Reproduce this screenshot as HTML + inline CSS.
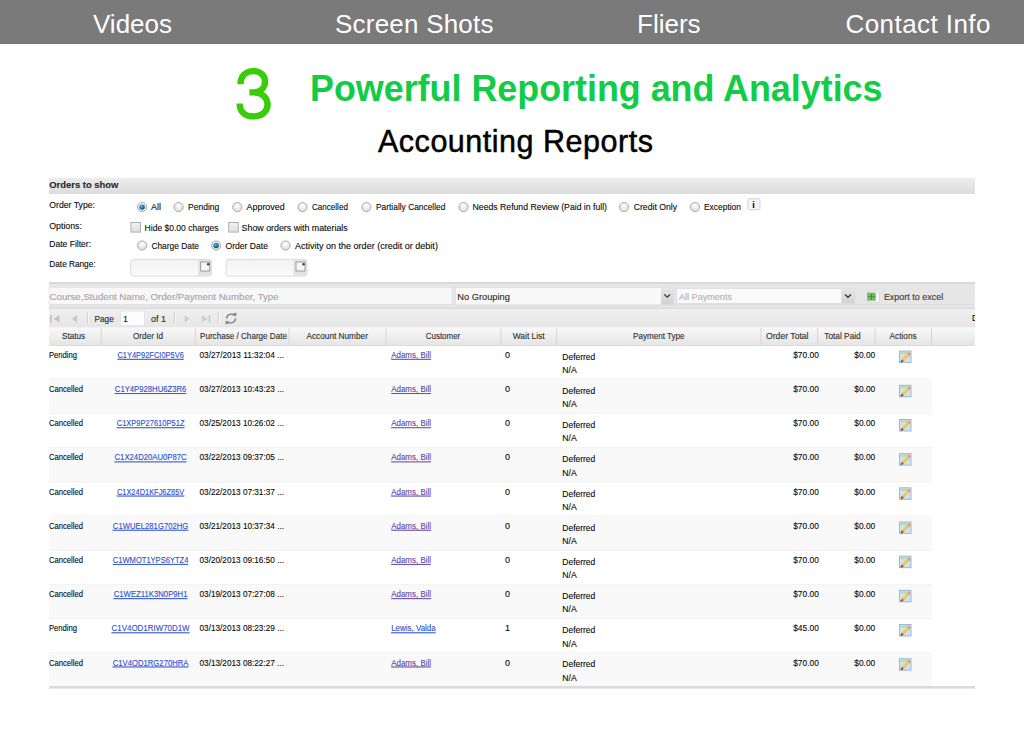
<!DOCTYPE html><html><head><meta charset="utf-8"><style>*{margin:0;padding:0}html,body{width:1024px;height:748px;overflow:hidden;background:#fff}svg{display:block}text{font-family:"Liberation Sans",sans-serif}</style></head><body>
<svg width="1024" height="748" viewBox="0 0 1024 748">
<defs>
<linearGradient id="hg" x1="0" y1="0" x2="0" y2="1"><stop offset="0" stop-color="#ececec"/><stop offset="1" stop-color="#dcdcdc"/></linearGradient>
<linearGradient id="colg" x1="0" y1="0" x2="0" y2="1"><stop offset="0" stop-color="#f8f8f8"/><stop offset="1" stop-color="#e4e4e4"/></linearGradient>
<linearGradient id="pg" x1="0" y1="0" x2="0" y2="1"><stop offset="0" stop-color="#efefef"/><stop offset="1" stop-color="#e6e6e6"/></linearGradient>
<linearGradient id="ig" x1="0" y1="0" x2="0" y2="1"><stop offset="0" stop-color="#f2f2f2"/><stop offset="1" stop-color="#fbfbfb"/></linearGradient>
<linearGradient id="bg" x1="0" y1="0" x2="0" y2="1"><stop offset="0" stop-color="#e6e6e6"/><stop offset="1" stop-color="#d2d2d2"/></linearGradient>
<radialGradient id="rg" cx="0.5" cy="0.35" r="0.6"><stop offset="0" stop-color="#ffffff"/><stop offset="1" stop-color="#dcdcdc"/></radialGradient>
<radialGradient id="dg" cx="0.42" cy="0.38" r="0.62"><stop offset="0" stop-color="#6cc6f0"/><stop offset="0.55" stop-color="#1a78b0"/><stop offset="1" stop-color="#0b4f80"/></radialGradient>
<linearGradient id="cg" x1="0" y1="0" x2="0" y2="1"><stop offset="0" stop-color="#f0f0f0"/><stop offset="1" stop-color="#e0e0e0"/></linearGradient>
</defs>
<rect x="0" y="0" width="1024" height="44" fill="#7a7a7a"/>
<rect x="0" y="43" width="1024" height="1" fill="#727272"/>
<text x="93" y="33" font-size="26" fill="#fff">Videos</text>
<text x="335" y="33" font-size="26" fill="#fff" textLength="158.5" lengthAdjust="spacing">Screen Shots</text>
<text x="637" y="33" font-size="26" fill="#fff">Fliers</text>
<text x="845.5" y="33" font-size="26" fill="#fff" textLength="145" lengthAdjust="spacing">Contact Info</text>
<path d="M240.5 84.2 C240.5 75.8 246 71.1 253.5 71.1 C260.5 71.1 265 75.8 265 81.6 C265 88.2 260 92.4 253 92.4 L249.4 92.4 M249.4 92.4 L253.5 92.4 C261.8 92.4 267.6 97.6 267.6 104.6 C267.6 111.8 261.6 116.4 253.3 116.4 C244.8 116.4 239.6 111.2 239.6 103.4" fill="none" stroke="#3acc08" stroke-width="6.4"/>
<text x="310" y="101" font-size="36" font-weight="bold" fill="#11cc44" textLength="572.5" lengthAdjust="spacingAndGlyphs">Powerful Reporting and Analytics</text>
<text x="378" y="151.7" font-size="30.5" fill="#000" stroke="#000" stroke-width="0.5" textLength="275" lengthAdjust="spacing">Accounting Reports</text>
<rect x="49" y="178" width="926" height="16" fill="url(#hg)"/>
<text x="49.3" y="188.3" font-size="9.2" textLength="69" lengthAdjust="spacingAndGlyphs" fill="#2a2a2a" stroke="#2a2a2a" stroke-width="0.12" font-weight="bold">Orders to show</text>
<text x="49.3" y="207.7" font-size="9" textLength="45.7" lengthAdjust="spacingAndGlyphs" stroke="#333" stroke-width="0.12">Order Type:</text>
<text x="49.3" y="228.8" font-size="9" textLength="32.6" lengthAdjust="spacingAndGlyphs" stroke="#333" stroke-width="0.12">Options:</text>
<text x="49.3" y="246.8" font-size="9" textLength="41.8" lengthAdjust="spacingAndGlyphs" stroke="#333" stroke-width="0.12">Date Filter:</text>
<text x="49.3" y="267.3" font-size="9" textLength="46.3" lengthAdjust="spacingAndGlyphs" stroke="#333" stroke-width="0.12">Date Range:</text>
<circle cx="142.1" cy="207.1" r="4.6" fill="url(#rg)" stroke="#a9a9a9" stroke-width="0.95"/>
<circle cx="142.1" cy="207.1" r="2.7" fill="url(#dg)"/>
<text x="151" y="209.8" font-size="9" textLength="10" lengthAdjust="spacingAndGlyphs" stroke="#333" stroke-width="0.12">All</text>
<circle cx="178.6" cy="207.1" r="4.6" fill="url(#rg)" stroke="#a9a9a9" stroke-width="0.95"/>
<text x="188" y="209.8" font-size="9" textLength="31.3" lengthAdjust="spacingAndGlyphs" stroke="#333" stroke-width="0.12">Pending</text>
<circle cx="237.3" cy="207.1" r="4.6" fill="url(#rg)" stroke="#a9a9a9" stroke-width="0.95"/>
<text x="246.6" y="209.8" font-size="9" textLength="38" lengthAdjust="spacingAndGlyphs" stroke="#333" stroke-width="0.12">Approved</text>
<circle cx="302.5" cy="207.1" r="4.6" fill="url(#rg)" stroke="#a9a9a9" stroke-width="0.95"/>
<text x="311.9" y="209.8" font-size="9" textLength="36" lengthAdjust="spacingAndGlyphs" stroke="#333" stroke-width="0.12">Cancelled</text>
<circle cx="366.4" cy="207.1" r="4.6" fill="url(#rg)" stroke="#a9a9a9" stroke-width="0.95"/>
<text x="376" y="209.8" font-size="9" textLength="69.4" lengthAdjust="spacingAndGlyphs" stroke="#333" stroke-width="0.12">Partially Cancelled</text>
<circle cx="463.5" cy="207.1" r="4.6" fill="url(#rg)" stroke="#a9a9a9" stroke-width="0.95"/>
<text x="472.6" y="209.8" font-size="9" textLength="134.4" lengthAdjust="spacingAndGlyphs" stroke="#333" stroke-width="0.12">Needs Refund Review (Paid in full)</text>
<circle cx="624" cy="207.1" r="4.6" fill="url(#rg)" stroke="#a9a9a9" stroke-width="0.95"/>
<text x="633.7" y="209.8" font-size="9" textLength="43.3" lengthAdjust="spacingAndGlyphs" stroke="#333" stroke-width="0.12">Credit Only</text>
<circle cx="695" cy="207.1" r="4.6" fill="url(#rg)" stroke="#a9a9a9" stroke-width="0.95"/>
<text x="704" y="209.8" font-size="9" textLength="37" lengthAdjust="spacingAndGlyphs" stroke="#333" stroke-width="0.12">Exception</text>
<rect x="748" y="198.8" width="12" height="11" rx="1.5" fill="#f6f6f6" stroke="#cccccc" stroke-width="0.9"/>
<text x="752.3" y="207.6" font-size="9" stroke="#333" stroke-width="0.12" font-weight="bold">i</text>
<rect x="130.9" y="222.5" width="9.6" height="9.6" fill="url(#cg)" stroke="#a8a8a8" stroke-width="0.9"/>
<text x="144.6" y="230.8" font-size="9" textLength="73.9" lengthAdjust="spacingAndGlyphs" stroke="#333" stroke-width="0.12">Hide $0.00 charges</text>
<rect x="228.7" y="222.5" width="9.6" height="9.6" fill="url(#cg)" stroke="#a8a8a8" stroke-width="0.9"/>
<text x="241.6" y="230.8" font-size="9" textLength="106.1" lengthAdjust="spacingAndGlyphs" stroke="#333" stroke-width="0.12">Show orders with materials</text>
<circle cx="142.1" cy="245.5" r="4.6" fill="url(#rg)" stroke="#a9a9a9" stroke-width="0.95"/>
<text x="151.4" y="248.7" font-size="9" textLength="47.5" lengthAdjust="spacingAndGlyphs" stroke="#333" stroke-width="0.12">Charge Date</text>
<circle cx="216.1" cy="245.5" r="4.6" fill="url(#rg)" stroke="#a9a9a9" stroke-width="0.95"/>
<circle cx="216.1" cy="245.5" r="2.7" fill="url(#dg)"/>
<text x="225.5" y="248.7" font-size="9" textLength="42.5" lengthAdjust="spacingAndGlyphs" stroke="#333" stroke-width="0.12">Order Date</text>
<circle cx="285.5" cy="245.5" r="4.6" fill="url(#rg)" stroke="#a9a9a9" stroke-width="0.95"/>
<text x="294.9" y="248.7" font-size="9" textLength="143" lengthAdjust="spacingAndGlyphs" stroke="#333" stroke-width="0.12">Activity on the order (credit or debit)</text>
<rect x="130.7" y="259.3" width="81" height="16.8" rx="3" fill="url(#ig)" stroke="#d6d6d6" stroke-width="0.9"/>
<rect x="198.2" y="259.8" width="13" height="15.8" fill="#e2e2e2"/>
<rect x="200.7" y="262" width="9" height="9" fill="#f6f6f6" stroke="#8a8a8a" stroke-width="0.8"/>
<circle cx="208.2" cy="264.2" r="1.3" fill="#444"/>
<rect x="226.0" y="259.3" width="81" height="16.8" rx="3" fill="url(#ig)" stroke="#d6d6d6" stroke-width="0.9"/>
<rect x="293.5" y="259.8" width="13" height="15.8" fill="#e2e2e2"/>
<rect x="296.0" y="262" width="9" height="9" fill="#f6f6f6" stroke="#8a8a8a" stroke-width="0.8"/>
<circle cx="303.5" cy="264.2" r="1.3" fill="#444"/>
<rect x="49" y="282" width="926" height="2" fill="#d8d8d8"/>
<rect x="49" y="284" width="926" height="25" fill="#e6e6e6"/>
<rect x="49" y="304.4" width="926" height="0.8" fill="#dddddd"/>
<rect x="49" y="307.6" width="926" height="1.2" fill="#dadada"/>
<rect x="49" y="287.5" width="403" height="17" fill="#f7f7f7" stroke="#dedede" stroke-width="0.6"/>
<text x="49.6" y="299.7" font-size="9.8" textLength="229" lengthAdjust="spacingAndGlyphs" fill="#a3a3a3" stroke="#a3a3a3" stroke-width="0.12">Course,Student Name, Order/Payment Number, Type</text>
<rect x="455.2" y="287.3" width="218.4" height="17.6" fill="#f9f9f9" stroke="#d8d8d8" stroke-width="0.7"/>
<rect x="661" y="287.6" width="12.5" height="17" fill="url(#bg)"/>
<path d="M664.3 294.4 L667.2 297.2 L670.1 294.4" fill="none" stroke="#333" stroke-width="1.3"/>
<text x="457.3" y="300.3" font-size="9" textLength="52.5" lengthAdjust="spacingAndGlyphs" fill="#2a2a2a" stroke="#2a2a2a" stroke-width="0.12">No Grouping</text>
<rect x="676.7" y="288.3" width="178.2" height="15.3" fill="#fafafa" stroke="#d8d8d8" stroke-width="0.7"/>
<rect x="841.2" y="288.6" width="13.5" height="14.8" fill="url(#bg)"/>
<path d="M845 294.5 L848 297.3 L851 294.5" fill="none" stroke="#333" stroke-width="1.3"/>
<text x="679" y="299.8" font-size="9" textLength="53" lengthAdjust="spacingAndGlyphs" fill="#b0b0b0" stroke="#b0b0b0" stroke-width="0.12">All Payments</text>
<path d="M868.5 290.8 h8 l3 3 v8.6 h-11 Z" fill="#f8f8fa" stroke="#cfcfd4" stroke-width="0.7"/>
<rect x="867.2" y="292.6" width="8.6" height="8.2" rx="0.8" fill="#78b868"/>
<path d="M868 296.7 h7 M871.5 293.5 v6.5" stroke="#3f8a35" stroke-width="0.9"/>
<text x="883.9" y="299.9" font-size="9" textLength="59.3" lengthAdjust="spacingAndGlyphs" fill="#3a3a3a" stroke="#3a3a3a" stroke-width="0.12">Export to excel</text>
<rect x="49" y="309" width="926" height="18.5" fill="url(#pg)"/>
<path d="M51 315 v7.5" stroke="#c0c0c0" stroke-width="1.6"/><path d="M59.5 315 L53.5 318.7 L59.5 322.5 Z" fill="#c6c6c6"/>
<path d="M77 315 L72 318.7 L77 322.5 Z" fill="#c6c6c6"/>
<path d="M87.4 312 v11.5" stroke="#cdcdcd" stroke-width="0.9"/><path d="M88.4 312 v11.5" stroke="#f8f8f8" stroke-width="0.9"/>
<path d="M174.5 312 v11.5" stroke="#cdcdcd" stroke-width="0.9"/><path d="M175.5 312 v11.5" stroke="#f8f8f8" stroke-width="0.9"/>
<path d="M218.4 312 v11.5" stroke="#cdcdcd" stroke-width="0.9"/><path d="M219.4 312 v11.5" stroke="#f8f8f8" stroke-width="0.9"/>
<text x="94.4" y="321.6" font-size="9" textLength="19.5" lengthAdjust="spacingAndGlyphs" fill="#2a2a2a" stroke="#2a2a2a" stroke-width="0.12">Page</text>
<rect x="120.5" y="311" width="24" height="14.8" fill="#fdfdfd" stroke="#dcdcdc" stroke-width="0.7"/>
<text x="123" y="322" font-size="9" fill="#222" stroke="#222" stroke-width="0.12">1</text>
<text x="151" y="321.6" font-size="9" textLength="15" lengthAdjust="spacingAndGlyphs" fill="#2a2a2a" stroke="#2a2a2a" stroke-width="0.12">of 1</text>
<path d="M184.6 315 L189.5 318.7 L184.6 322.5 Z" fill="#cfcfcf"/>
<path d="M201.8 315 L207.5 318.7 L201.8 322.5 Z" fill="#cfcfcf"/><path d="M209.5 315 v7.5" stroke="#c6c6c6" stroke-width="1.5"/>
<g fill="none" stroke="#858585" stroke-width="1.5"><path d="M226.5 318.5 a4.6 4.6 0 0 1 8.2 -2.6"/><path d="M235.5 318.5 a4.6 4.6 0 0 1 -8.2 2.6"/></g><path d="M233 313.2 l3.6 -0.4 l-0.4 3.8 Z M229 323.8 l-3.6 0.4 l0.4 -3.8 Z" fill="#858585"/>
<clipPath id="dc"><rect x="960" y="310" width="15" height="15"/></clipPath>
<g clip-path="url(#dc)">
<text x="971.9" y="320.7" font-size="8.5" stroke="#333" stroke-width="0.12">D</text>
</g>
<rect x="49" y="328" width="926" height="17.7" fill="url(#colg)"/>
<rect x="49" y="345" width="926" height="0.8" fill="#dadada"/>
<path d="M101.3 328 v17.5" stroke="#d2d2d2" stroke-width="0.9"/>
<path d="M195.3 328 v17.5" stroke="#d2d2d2" stroke-width="0.9"/>
<path d="M289 328 v17.5" stroke="#d2d2d2" stroke-width="0.9"/>
<path d="M386 328 v17.5" stroke="#d2d2d2" stroke-width="0.9"/>
<path d="M501 328 v17.5" stroke="#d2d2d2" stroke-width="0.9"/>
<path d="M556.6 328 v17.5" stroke="#d2d2d2" stroke-width="0.9"/>
<path d="M761 328 v17.5" stroke="#d2d2d2" stroke-width="0.9"/>
<path d="M817.6 328 v17.5" stroke="#d2d2d2" stroke-width="0.9"/>
<path d="M875 328 v17.5" stroke="#d2d2d2" stroke-width="0.9"/>
<path d="M931.5 328 v17.5" stroke="#d2d2d2" stroke-width="0.9"/>
<text x="62.0" y="338.9" font-size="8.6" textLength="23" lengthAdjust="spacingAndGlyphs" fill="#2e2e2e" stroke="#2e2e2e" stroke-width="0.12">Status</text>
<text x="133.0" y="338.9" font-size="8.6" textLength="30" lengthAdjust="spacingAndGlyphs" fill="#2e2e2e" stroke="#2e2e2e" stroke-width="0.12">Order Id</text>
<text x="200.0" y="338.9" font-size="8.6" textLength="87" lengthAdjust="spacingAndGlyphs" fill="#2e2e2e" stroke="#2e2e2e" stroke-width="0.12">Purchase / Charge Date</text>
<text x="306.45" y="338.9" font-size="8.6" textLength="61.5" lengthAdjust="spacingAndGlyphs" fill="#2e2e2e" stroke="#2e2e2e" stroke-width="0.12">Account Number</text>
<text x="425.8" y="338.9" font-size="8.6" textLength="34.4" lengthAdjust="spacingAndGlyphs" fill="#2e2e2e" stroke="#2e2e2e" stroke-width="0.12">Customer</text>
<text x="512.7" y="338.9" font-size="8.6" textLength="32" lengthAdjust="spacingAndGlyphs" fill="#2e2e2e" stroke="#2e2e2e" stroke-width="0.12">Wait List</text>
<text x="633.05" y="338.9" font-size="8.6" textLength="51.5" lengthAdjust="spacingAndGlyphs" fill="#2e2e2e" stroke="#2e2e2e" stroke-width="0.12">Payment Type</text>
<text x="766.05" y="338.9" font-size="8.6" textLength="42.5" lengthAdjust="spacingAndGlyphs" fill="#2e2e2e" stroke="#2e2e2e" stroke-width="0.12">Order Total</text>
<text x="824.25" y="338.9" font-size="8.6" textLength="36.5" lengthAdjust="spacingAndGlyphs" fill="#2e2e2e" stroke="#2e2e2e" stroke-width="0.12">Total Paid</text>
<text x="889.6" y="338.9" font-size="8.6" textLength="27" lengthAdjust="spacingAndGlyphs" fill="#2e2e2e" stroke="#2e2e2e" stroke-width="0.12">Actions</text>
<rect x="49" y="378.78" width="882.8" height="1" fill="#f1f1f1"/>
<text x="49" y="357.9" font-size="9" textLength="28" lengthAdjust="spacingAndGlyphs" stroke="#333" stroke-width="0.12">Pending</text>
<text x="117.4" y="357.9" font-size="9" textLength="66.4" lengthAdjust="spacingAndGlyphs" fill="#2a4fd0" stroke="#2a4fd0" stroke-width="0.12" text-decoration="underline">C1Y4P92FCI0P5V6</text>
<text x="199.5" y="357.9" font-size="9" textLength="84.5" lengthAdjust="spacingAndGlyphs" stroke="#333" stroke-width="0.12">03/27/2013 11:32:04 ...</text>
<text x="391.2" y="357.9" font-size="9" textLength="39.8" lengthAdjust="spacingAndGlyphs" fill="#5b45a8" stroke="#5b45a8" stroke-width="0.12" text-decoration="underline">Adams, Bill</text>
<text x="505" y="357.9" font-size="9" stroke="#333" stroke-width="0.12">0</text>
<text x="562.3" y="359.8" font-size="9" textLength="33" lengthAdjust="spacingAndGlyphs" stroke="#333" stroke-width="0.12">Deferred</text>
<text x="562.3" y="373.1" font-size="9" textLength="14.5" lengthAdjust="spacingAndGlyphs" stroke="#333" stroke-width="0.12">N/A</text>
<text x="818.8" y="357.9" font-size="9" textLength="25.6" lengthAdjust="spacingAndGlyphs" stroke="#333" stroke-width="0.12" text-anchor="end">$70.00</text>
<text x="875.2" y="357.9" font-size="9" textLength="20.9" lengthAdjust="spacingAndGlyphs" stroke="#333" stroke-width="0.12" text-anchor="end">$0.00</text>
<g transform="translate(899,350.6)"><rect x="0.5" y="0.5" width="11.5" height="11.5" fill="#cfe2f4" stroke="#8db4dc" stroke-width="0.9"/><rect x="1.5" y="1.5" width="9.5" height="2" fill="#b9dba4"/><path d="M3.2 10.3 L10 3.5" stroke="#f0c860" stroke-width="3.2"/><path d="M9.3 4.2 L11 2.5" stroke="#e89a80" stroke-width="3"/><path d="M2 11.5 L4 9.5" stroke="#8a5a30" stroke-width="2"/></g>
<rect x="49" y="379.78" width="882.8" height="34.18" fill="#f9f9f9"/>
<rect x="49" y="412.96" width="882.8" height="1" fill="#f1f1f1"/>
<text x="49" y="392.08" font-size="9" textLength="34" lengthAdjust="spacingAndGlyphs" stroke="#333" stroke-width="0.12">Cancelled</text>
<text x="114.85" y="392.08" font-size="9" textLength="71.5" lengthAdjust="spacingAndGlyphs" fill="#2a4fd0" stroke="#2a4fd0" stroke-width="0.12" text-decoration="underline">C1Y4P928HU6Z3R6</text>
<text x="199.5" y="392.08" font-size="9" textLength="84.5" lengthAdjust="spacingAndGlyphs" stroke="#333" stroke-width="0.12">03/27/2013 10:43:23 ...</text>
<text x="391.2" y="392.08" font-size="9" textLength="39.8" lengthAdjust="spacingAndGlyphs" fill="#5b45a8" stroke="#5b45a8" stroke-width="0.12" text-decoration="underline">Adams, Bill</text>
<text x="505" y="392.08" font-size="9" stroke="#333" stroke-width="0.12">0</text>
<text x="562.3" y="393.98" font-size="9" textLength="33" lengthAdjust="spacingAndGlyphs" stroke="#333" stroke-width="0.12">Deferred</text>
<text x="562.3" y="407.28" font-size="9" textLength="14.5" lengthAdjust="spacingAndGlyphs" stroke="#333" stroke-width="0.12">N/A</text>
<text x="818.8" y="392.08" font-size="9" textLength="25.6" lengthAdjust="spacingAndGlyphs" stroke="#333" stroke-width="0.12" text-anchor="end">$70.00</text>
<text x="875.2" y="392.08" font-size="9" textLength="20.9" lengthAdjust="spacingAndGlyphs" stroke="#333" stroke-width="0.12" text-anchor="end">$0.00</text>
<g transform="translate(899,384.78)"><rect x="0.5" y="0.5" width="11.5" height="11.5" fill="#cfe2f4" stroke="#8db4dc" stroke-width="0.9"/><rect x="1.5" y="1.5" width="9.5" height="2" fill="#b9dba4"/><path d="M3.2 10.3 L10 3.5" stroke="#f0c860" stroke-width="3.2"/><path d="M9.3 4.2 L11 2.5" stroke="#e89a80" stroke-width="3"/><path d="M2 11.5 L4 9.5" stroke="#8a5a30" stroke-width="2"/></g>
<rect x="49" y="447.14" width="882.8" height="1" fill="#f1f1f1"/>
<text x="49" y="426.26" font-size="9" textLength="34" lengthAdjust="spacingAndGlyphs" stroke="#333" stroke-width="0.12">Cancelled</text>
<text x="116.7" y="426.26" font-size="9" textLength="67.8" lengthAdjust="spacingAndGlyphs" fill="#2a4fd0" stroke="#2a4fd0" stroke-width="0.12" text-decoration="underline">C1XP9P27610P51Z</text>
<text x="199.5" y="426.26" font-size="9" textLength="84.5" lengthAdjust="spacingAndGlyphs" stroke="#333" stroke-width="0.12">03/25/2013 10:26:02 ...</text>
<text x="391.2" y="426.26" font-size="9" textLength="39.8" lengthAdjust="spacingAndGlyphs" fill="#5b45a8" stroke="#5b45a8" stroke-width="0.12" text-decoration="underline">Adams, Bill</text>
<text x="505" y="426.26" font-size="9" stroke="#333" stroke-width="0.12">0</text>
<text x="562.3" y="428.16" font-size="9" textLength="33" lengthAdjust="spacingAndGlyphs" stroke="#333" stroke-width="0.12">Deferred</text>
<text x="562.3" y="441.46" font-size="9" textLength="14.5" lengthAdjust="spacingAndGlyphs" stroke="#333" stroke-width="0.12">N/A</text>
<text x="818.8" y="426.26" font-size="9" textLength="25.6" lengthAdjust="spacingAndGlyphs" stroke="#333" stroke-width="0.12" text-anchor="end">$70.00</text>
<text x="875.2" y="426.26" font-size="9" textLength="20.9" lengthAdjust="spacingAndGlyphs" stroke="#333" stroke-width="0.12" text-anchor="end">$0.00</text>
<g transform="translate(899,418.96)"><rect x="0.5" y="0.5" width="11.5" height="11.5" fill="#cfe2f4" stroke="#8db4dc" stroke-width="0.9"/><rect x="1.5" y="1.5" width="9.5" height="2" fill="#b9dba4"/><path d="M3.2 10.3 L10 3.5" stroke="#f0c860" stroke-width="3.2"/><path d="M9.3 4.2 L11 2.5" stroke="#e89a80" stroke-width="3"/><path d="M2 11.5 L4 9.5" stroke="#8a5a30" stroke-width="2"/></g>
<rect x="49" y="448.14" width="882.8" height="34.18" fill="#f9f9f9"/>
<rect x="49" y="481.32" width="882.8" height="1" fill="#f1f1f1"/>
<text x="49" y="460.44" font-size="9" textLength="34" lengthAdjust="spacingAndGlyphs" stroke="#333" stroke-width="0.12">Cancelled</text>
<text x="114.55" y="460.44" font-size="9" textLength="72.1" lengthAdjust="spacingAndGlyphs" fill="#2a4fd0" stroke="#2a4fd0" stroke-width="0.12" text-decoration="underline">C1X24D20AU0P87C</text>
<text x="199.5" y="460.44" font-size="9" textLength="84.5" lengthAdjust="spacingAndGlyphs" stroke="#333" stroke-width="0.12">03/22/2013 09:37:05 ...</text>
<text x="391.2" y="460.44" font-size="9" textLength="39.8" lengthAdjust="spacingAndGlyphs" fill="#5b45a8" stroke="#5b45a8" stroke-width="0.12" text-decoration="underline">Adams, Bill</text>
<text x="505" y="460.44" font-size="9" stroke="#333" stroke-width="0.12">0</text>
<text x="562.3" y="462.34" font-size="9" textLength="33" lengthAdjust="spacingAndGlyphs" stroke="#333" stroke-width="0.12">Deferred</text>
<text x="562.3" y="475.64" font-size="9" textLength="14.5" lengthAdjust="spacingAndGlyphs" stroke="#333" stroke-width="0.12">N/A</text>
<text x="818.8" y="460.44" font-size="9" textLength="25.6" lengthAdjust="spacingAndGlyphs" stroke="#333" stroke-width="0.12" text-anchor="end">$70.00</text>
<text x="875.2" y="460.44" font-size="9" textLength="20.9" lengthAdjust="spacingAndGlyphs" stroke="#333" stroke-width="0.12" text-anchor="end">$0.00</text>
<g transform="translate(899,453.14)"><rect x="0.5" y="0.5" width="11.5" height="11.5" fill="#cfe2f4" stroke="#8db4dc" stroke-width="0.9"/><rect x="1.5" y="1.5" width="9.5" height="2" fill="#b9dba4"/><path d="M3.2 10.3 L10 3.5" stroke="#f0c860" stroke-width="3.2"/><path d="M9.3 4.2 L11 2.5" stroke="#e89a80" stroke-width="3"/><path d="M2 11.5 L4 9.5" stroke="#8a5a30" stroke-width="2"/></g>
<rect x="49" y="515.5" width="882.8" height="1" fill="#f1f1f1"/>
<text x="49" y="494.62" font-size="9" textLength="34" lengthAdjust="spacingAndGlyphs" stroke="#333" stroke-width="0.12">Cancelled</text>
<text x="116.9" y="494.62" font-size="9" textLength="67.4" lengthAdjust="spacingAndGlyphs" fill="#2a4fd0" stroke="#2a4fd0" stroke-width="0.12" text-decoration="underline">C1X24D1KFJ6Z85V</text>
<text x="199.5" y="494.62" font-size="9" textLength="84.5" lengthAdjust="spacingAndGlyphs" stroke="#333" stroke-width="0.12">03/22/2013 07:31:37 ...</text>
<text x="391.2" y="494.62" font-size="9" textLength="39.8" lengthAdjust="spacingAndGlyphs" fill="#5b45a8" stroke="#5b45a8" stroke-width="0.12" text-decoration="underline">Adams, Bill</text>
<text x="505" y="494.62" font-size="9" stroke="#333" stroke-width="0.12">0</text>
<text x="562.3" y="496.52" font-size="9" textLength="33" lengthAdjust="spacingAndGlyphs" stroke="#333" stroke-width="0.12">Deferred</text>
<text x="562.3" y="509.82" font-size="9" textLength="14.5" lengthAdjust="spacingAndGlyphs" stroke="#333" stroke-width="0.12">N/A</text>
<text x="818.8" y="494.62" font-size="9" textLength="25.6" lengthAdjust="spacingAndGlyphs" stroke="#333" stroke-width="0.12" text-anchor="end">$70.00</text>
<text x="875.2" y="494.62" font-size="9" textLength="20.9" lengthAdjust="spacingAndGlyphs" stroke="#333" stroke-width="0.12" text-anchor="end">$0.00</text>
<g transform="translate(899,487.32)"><rect x="0.5" y="0.5" width="11.5" height="11.5" fill="#cfe2f4" stroke="#8db4dc" stroke-width="0.9"/><rect x="1.5" y="1.5" width="9.5" height="2" fill="#b9dba4"/><path d="M3.2 10.3 L10 3.5" stroke="#f0c860" stroke-width="3.2"/><path d="M9.3 4.2 L11 2.5" stroke="#e89a80" stroke-width="3"/><path d="M2 11.5 L4 9.5" stroke="#8a5a30" stroke-width="2"/></g>
<rect x="49" y="516.5" width="882.8" height="34.18" fill="#f9f9f9"/>
<rect x="49" y="549.68" width="882.8" height="1" fill="#f1f1f1"/>
<text x="49" y="528.8" font-size="9" textLength="34" lengthAdjust="spacingAndGlyphs" stroke="#333" stroke-width="0.12">Cancelled</text>
<text x="112.85" y="528.8" font-size="9" textLength="75.5" lengthAdjust="spacingAndGlyphs" fill="#2a4fd0" stroke="#2a4fd0" stroke-width="0.12" text-decoration="underline">C1WUEL281G702HG</text>
<text x="199.5" y="528.8" font-size="9" textLength="84.5" lengthAdjust="spacingAndGlyphs" stroke="#333" stroke-width="0.12">03/21/2013 10:37:34 ...</text>
<text x="391.2" y="528.8" font-size="9" textLength="39.8" lengthAdjust="spacingAndGlyphs" fill="#5b45a8" stroke="#5b45a8" stroke-width="0.12" text-decoration="underline">Adams, Bill</text>
<text x="505" y="528.8" font-size="9" stroke="#333" stroke-width="0.12">0</text>
<text x="562.3" y="530.7" font-size="9" textLength="33" lengthAdjust="spacingAndGlyphs" stroke="#333" stroke-width="0.12">Deferred</text>
<text x="562.3" y="544.0" font-size="9" textLength="14.5" lengthAdjust="spacingAndGlyphs" stroke="#333" stroke-width="0.12">N/A</text>
<text x="818.8" y="528.8" font-size="9" textLength="25.6" lengthAdjust="spacingAndGlyphs" stroke="#333" stroke-width="0.12" text-anchor="end">$70.00</text>
<text x="875.2" y="528.8" font-size="9" textLength="20.9" lengthAdjust="spacingAndGlyphs" stroke="#333" stroke-width="0.12" text-anchor="end">$0.00</text>
<g transform="translate(899,521.5)"><rect x="0.5" y="0.5" width="11.5" height="11.5" fill="#cfe2f4" stroke="#8db4dc" stroke-width="0.9"/><rect x="1.5" y="1.5" width="9.5" height="2" fill="#b9dba4"/><path d="M3.2 10.3 L10 3.5" stroke="#f0c860" stroke-width="3.2"/><path d="M9.3 4.2 L11 2.5" stroke="#e89a80" stroke-width="3"/><path d="M2 11.5 L4 9.5" stroke="#8a5a30" stroke-width="2"/></g>
<rect x="49" y="583.86" width="882.8" height="1" fill="#f1f1f1"/>
<text x="49" y="562.98" font-size="9" textLength="34" lengthAdjust="spacingAndGlyphs" stroke="#333" stroke-width="0.12">Cancelled</text>
<text x="112.85" y="562.98" font-size="9" textLength="75.5" lengthAdjust="spacingAndGlyphs" fill="#2a4fd0" stroke="#2a4fd0" stroke-width="0.12" text-decoration="underline">C1WMOT1YPS6YTZ4</text>
<text x="199.5" y="562.98" font-size="9" textLength="84.5" lengthAdjust="spacingAndGlyphs" stroke="#333" stroke-width="0.12">03/20/2013 09:16:50 ...</text>
<text x="391.2" y="562.98" font-size="9" textLength="39.8" lengthAdjust="spacingAndGlyphs" fill="#5b45a8" stroke="#5b45a8" stroke-width="0.12" text-decoration="underline">Adams, Bill</text>
<text x="505" y="562.98" font-size="9" stroke="#333" stroke-width="0.12">0</text>
<text x="562.3" y="564.88" font-size="9" textLength="33" lengthAdjust="spacingAndGlyphs" stroke="#333" stroke-width="0.12">Deferred</text>
<text x="562.3" y="578.18" font-size="9" textLength="14.5" lengthAdjust="spacingAndGlyphs" stroke="#333" stroke-width="0.12">N/A</text>
<text x="818.8" y="562.98" font-size="9" textLength="25.6" lengthAdjust="spacingAndGlyphs" stroke="#333" stroke-width="0.12" text-anchor="end">$70.00</text>
<text x="875.2" y="562.98" font-size="9" textLength="20.9" lengthAdjust="spacingAndGlyphs" stroke="#333" stroke-width="0.12" text-anchor="end">$0.00</text>
<g transform="translate(899,555.68)"><rect x="0.5" y="0.5" width="11.5" height="11.5" fill="#cfe2f4" stroke="#8db4dc" stroke-width="0.9"/><rect x="1.5" y="1.5" width="9.5" height="2" fill="#b9dba4"/><path d="M3.2 10.3 L10 3.5" stroke="#f0c860" stroke-width="3.2"/><path d="M9.3 4.2 L11 2.5" stroke="#e89a80" stroke-width="3"/><path d="M2 11.5 L4 9.5" stroke="#8a5a30" stroke-width="2"/></g>
<rect x="49" y="584.86" width="882.8" height="34.18" fill="#f9f9f9"/>
<rect x="49" y="618.04" width="882.8" height="1" fill="#f1f1f1"/>
<text x="49" y="597.16" font-size="9" textLength="34" lengthAdjust="spacingAndGlyphs" stroke="#333" stroke-width="0.12">Cancelled</text>
<text x="113.7" y="597.16" font-size="9" textLength="73.8" lengthAdjust="spacingAndGlyphs" fill="#2a4fd0" stroke="#2a4fd0" stroke-width="0.12" text-decoration="underline">C1WEZ11K3N0P9H1</text>
<text x="199.5" y="597.16" font-size="9" textLength="84.5" lengthAdjust="spacingAndGlyphs" stroke="#333" stroke-width="0.12">03/19/2013 07:27:08 ...</text>
<text x="391.2" y="597.16" font-size="9" textLength="39.8" lengthAdjust="spacingAndGlyphs" fill="#5b45a8" stroke="#5b45a8" stroke-width="0.12" text-decoration="underline">Adams, Bill</text>
<text x="505" y="597.16" font-size="9" stroke="#333" stroke-width="0.12">0</text>
<text x="562.3" y="599.06" font-size="9" textLength="33" lengthAdjust="spacingAndGlyphs" stroke="#333" stroke-width="0.12">Deferred</text>
<text x="562.3" y="612.36" font-size="9" textLength="14.5" lengthAdjust="spacingAndGlyphs" stroke="#333" stroke-width="0.12">N/A</text>
<text x="818.8" y="597.16" font-size="9" textLength="25.6" lengthAdjust="spacingAndGlyphs" stroke="#333" stroke-width="0.12" text-anchor="end">$70.00</text>
<text x="875.2" y="597.16" font-size="9" textLength="20.9" lengthAdjust="spacingAndGlyphs" stroke="#333" stroke-width="0.12" text-anchor="end">$0.00</text>
<g transform="translate(899,589.86)"><rect x="0.5" y="0.5" width="11.5" height="11.5" fill="#cfe2f4" stroke="#8db4dc" stroke-width="0.9"/><rect x="1.5" y="1.5" width="9.5" height="2" fill="#b9dba4"/><path d="M3.2 10.3 L10 3.5" stroke="#f0c860" stroke-width="3.2"/><path d="M9.3 4.2 L11 2.5" stroke="#e89a80" stroke-width="3"/><path d="M2 11.5 L4 9.5" stroke="#8a5a30" stroke-width="2"/></g>
<rect x="49" y="652.22" width="882.8" height="1" fill="#f1f1f1"/>
<text x="49" y="631.34" font-size="9" textLength="28" lengthAdjust="spacingAndGlyphs" stroke="#333" stroke-width="0.12">Pending</text>
<text x="111.6" y="631.34" font-size="9" textLength="78" lengthAdjust="spacingAndGlyphs" fill="#2a4fd0" stroke="#2a4fd0" stroke-width="0.12" text-decoration="underline">C1V4OD1RIW70D1W</text>
<text x="199.5" y="631.34" font-size="9" textLength="84.5" lengthAdjust="spacingAndGlyphs" stroke="#333" stroke-width="0.12">03/13/2013 08:23:29 ...</text>
<text x="391.2" y="631.34" font-size="9" textLength="44.5" lengthAdjust="spacingAndGlyphs" fill="#2a4fd0" stroke="#2a4fd0" stroke-width="0.12" text-decoration="underline">Lewis, Valda</text>
<text x="505" y="631.34" font-size="9" stroke="#333" stroke-width="0.12">1</text>
<text x="562.3" y="633.24" font-size="9" textLength="33" lengthAdjust="spacingAndGlyphs" stroke="#333" stroke-width="0.12">Deferred</text>
<text x="562.3" y="646.54" font-size="9" textLength="14.5" lengthAdjust="spacingAndGlyphs" stroke="#333" stroke-width="0.12">N/A</text>
<text x="818.8" y="631.34" font-size="9" textLength="25.6" lengthAdjust="spacingAndGlyphs" stroke="#333" stroke-width="0.12" text-anchor="end">$45.00</text>
<text x="875.2" y="631.34" font-size="9" textLength="20.9" lengthAdjust="spacingAndGlyphs" stroke="#333" stroke-width="0.12" text-anchor="end">$0.00</text>
<g transform="translate(899,624.04)"><rect x="0.5" y="0.5" width="11.5" height="11.5" fill="#cfe2f4" stroke="#8db4dc" stroke-width="0.9"/><rect x="1.5" y="1.5" width="9.5" height="2" fill="#b9dba4"/><path d="M3.2 10.3 L10 3.5" stroke="#f0c860" stroke-width="3.2"/><path d="M9.3 4.2 L11 2.5" stroke="#e89a80" stroke-width="3"/><path d="M2 11.5 L4 9.5" stroke="#8a5a30" stroke-width="2"/></g>
<rect x="49" y="653.22" width="882.8" height="34.18" fill="#f9f9f9"/>
<text x="49" y="665.52" font-size="9" textLength="34" lengthAdjust="spacingAndGlyphs" stroke="#333" stroke-width="0.12">Cancelled</text>
<text x="112.75" y="665.52" font-size="9" textLength="75.7" lengthAdjust="spacingAndGlyphs" fill="#2a4fd0" stroke="#2a4fd0" stroke-width="0.12" text-decoration="underline">C1V4OD1RG270HRA</text>
<text x="199.5" y="665.52" font-size="9" textLength="84.5" lengthAdjust="spacingAndGlyphs" stroke="#333" stroke-width="0.12">03/13/2013 08:22:27 ...</text>
<text x="391.2" y="665.52" font-size="9" textLength="39.8" lengthAdjust="spacingAndGlyphs" fill="#5b45a8" stroke="#5b45a8" stroke-width="0.12" text-decoration="underline">Adams, Bill</text>
<text x="505" y="665.52" font-size="9" stroke="#333" stroke-width="0.12">0</text>
<text x="562.3" y="667.42" font-size="9" textLength="33" lengthAdjust="spacingAndGlyphs" stroke="#333" stroke-width="0.12">Deferred</text>
<text x="562.3" y="680.72" font-size="9" textLength="14.5" lengthAdjust="spacingAndGlyphs" stroke="#333" stroke-width="0.12">N/A</text>
<text x="818.8" y="665.52" font-size="9" textLength="25.6" lengthAdjust="spacingAndGlyphs" stroke="#333" stroke-width="0.12" text-anchor="end">$70.00</text>
<text x="875.2" y="665.52" font-size="9" textLength="20.9" lengthAdjust="spacingAndGlyphs" stroke="#333" stroke-width="0.12" text-anchor="end">$0.00</text>
<g transform="translate(899,658.22)"><rect x="0.5" y="0.5" width="11.5" height="11.5" fill="#cfe2f4" stroke="#8db4dc" stroke-width="0.9"/><rect x="1.5" y="1.5" width="9.5" height="2" fill="#b9dba4"/><path d="M3.2 10.3 L10 3.5" stroke="#f0c860" stroke-width="3.2"/><path d="M9.3 4.2 L11 2.5" stroke="#e89a80" stroke-width="3"/><path d="M2 11.5 L4 9.5" stroke="#8a5a30" stroke-width="2"/></g>
<rect x="49" y="686" width="926" height="2.6" fill="#dadada"/>
</svg></body></html>
